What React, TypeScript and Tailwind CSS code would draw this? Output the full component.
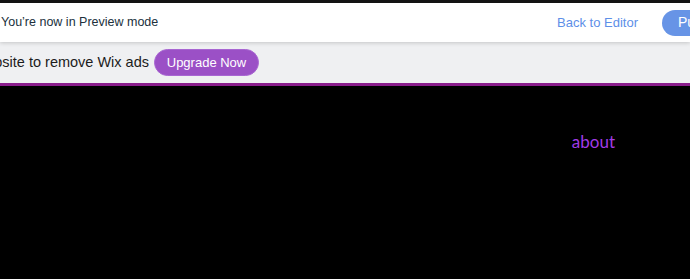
export default function App() {
  return (
    <div className="w-[690px] h-[279px] overflow-hidden bg-black" style={{ fontFamily: "'Liberation Sans', Arial, sans-serif" }}>
      {/* Preview bar */}
      <div className="h-[3px] bg-[#141414]"></div>
      <div className="relative z-10 h-[39px] bg-white flex items-center shadow-[0_1px_4px_rgba(0,0,0,0.18)]">
        <div className="pl-[1px] text-[12.5px] text-[#20303c] whitespace-nowrap">You’re now in Preview mode</div>
        <div className="ml-auto flex items-center shrink-0">
          <button className="text-[13px] text-[#5d8fe8] whitespace-nowrap">Back to Editor</button>
          <button className="ml-[24px] w-[80px] h-[26px] shrink-0 rounded-full bg-[#6794e6] text-white text-[14px] text-left pl-[16px] -mr-[52px]">
            Publish
          </button>
        </div>
      </div>

      {/* Wix ads banner */}
      <div className="h-[41px] bg-[#eff0f2] flex items-center">
        <div className="w-[149px] overflow-hidden flex justify-end">
          <span className="shrink-0 whitespace-nowrap text-[14.5px] text-[#1c1c1c]">Upgrade this website to remove Wix ads</span>
        </div>
        <button className="ml-[5px] h-[27px] w-[105px] rounded-full bg-[#9b50c6] border border-[#a866d2] text-white text-[13px] leading-none">
          Upgrade Now
        </button>
      </div>
      <div className="h-[3px] bg-[#8a1d8c]"></div>

      {/* Site header */}
      <div className="flex justify-end pr-[75px] pt-[47px]">
        <a className="text-[17px] text-[#a23be6] leading-none" style={{ fontFamily: "Lato, 'Open Sans', sans-serif" }}>about</a>
      </div>
    </div>
  );
}
